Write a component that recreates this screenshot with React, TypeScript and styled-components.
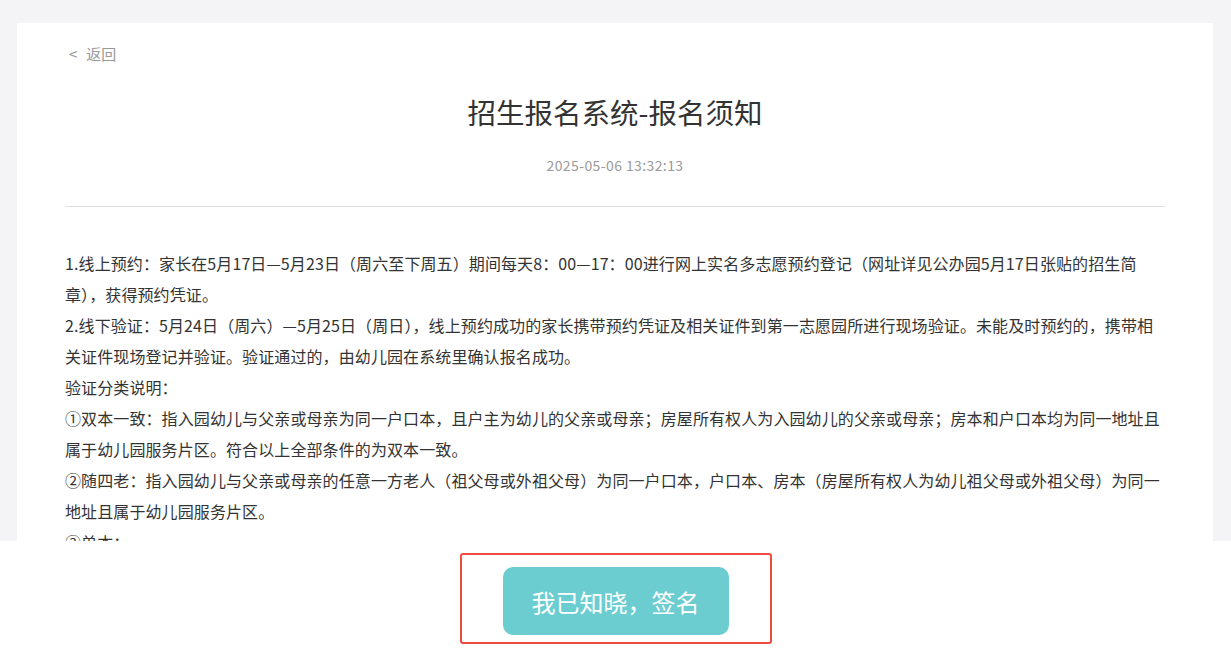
import styled, { createGlobalStyle } from 'styled-components';

const GlobalStyle = createGlobalStyle`
  html,
  body {
    margin: 0;
    padding: 0;
    background: #f4f3f6;
    font-family: "Microsoft YaHei", "Noto Sans CJK SC", "Noto Sans", sans-serif;
    color: #333;
  }
`;

const Page = styled.div`
  padding: 23px 18px 120px 17px;
`;

const Card = styled.div`
  background: #fff;
  padding: 18px 48px 40px;
`;

const Back = styled.a`
  display: inline-flex;
  align-items: center;
  gap: 9px;
  margin-left: 4px;
  font-size: 15px;
  line-height: 22px;
  color: #999;
  text-decoration: none;
  cursor: pointer;
`;

const Header = styled.header`
  display: flex;
  flex-direction: column;
  align-items: center;
  padding-bottom: 31px;
  border-bottom: 1px solid #dedede;
`;

const Title = styled.h1`
  margin: 27px 0 0;
  font-size: 28.5px;
  font-weight: 400;
  line-height: 40px;
  color: #333;
`;

const Time = styled.div`
  margin-top: 23px;
  font-size: 14px;
  line-height: 20px;
  letter-spacing: 0.4px;
  color: #999;
`;

const Content = styled.div`
  margin-top: 41px;
  font-size: 16px;
  line-height: 31px;
  letter-spacing: 0.1px;
  color: #333;
  p {
    margin: 0;
  }
`;

const Footer = styled.footer`
  position: fixed;
  left: 0;
  right: 0;
  bottom: 0;
  height: 112px;
  background: #fff;
  display: flex;
  justify-content: center;
  align-items: flex-start;
  padding-top: 12px;
  box-sizing: border-box;
`;

const Highlight = styled.div`
  display: flex;
  padding: 12px 41px 7px;
  border: 2px solid #f04a3e;
  border-radius: 3px;
`;

const SignButton = styled.button`
  width: 226px;
  height: 68px;
  border: none;
  border-radius: 10px;
  background: #6ccdd1;
  color: #fff;
  font-family: inherit;
  font-size: 24px;
  cursor: pointer;
`;

const paragraphs = [
  '1.线上预约：家长在5月17日—5月23日（周六至下周五）期间每天8：00—17：00进行网上实名多志愿预约登记（网址详见公办园5月17日张贴的招生简章），获得预约凭证。',
  '2.线下验证：5月24日（周六）—5月25日（周日），线上预约成功的家长携带预约凭证及相关证件到第一志愿园所进行现场验证。未能及时预约的，携带相关证件现场登记并验证。验证通过的，由幼儿园在系统里确认报名成功。',
  '验证分类说明：',
  '①双本一致：指入园幼儿与父亲或母亲为同一户口本，且户主为幼儿的父亲或母亲；房屋所有权人为入园幼儿的父亲或母亲；房本和户口本均为同一地址且属于幼儿园服务片区。符合以上全部条件的为双本一致。',
  '②随四老：指入园幼儿与父亲或母亲的任意一方老人（祖父母或外祖父母）为同一户口本，户口本、房本（房屋所有权人为幼儿祖父母或外祖父母）为同一地址且属于幼儿园服务片区。',
  '③单本：',
  '指入园幼儿与父亲或母亲为同一户口本，户口地址属于幼儿园服务片区。',
  '④其他：不符合以上条件的适龄幼儿。',
];

export default function App() {
  return (
    <>
      <GlobalStyle />
      <Page>
        <Card>
          <Back>
            <span>&lt;</span>
            <span>返回</span>
          </Back>
          <Header>
            <Title>招生报名系统-报名须知</Title>
            <Time>2025-05-06 13:32:13</Time>
          </Header>
          <Content>
            {paragraphs.map((text) => (
              <p key={text}>{text}</p>
            ))}
          </Content>
        </Card>
      </Page>
      <Footer>
        <Highlight>
          <SignButton>我已知晓，签名</SignButton>
        </Highlight>
      </Footer>
    </>
  );
}
